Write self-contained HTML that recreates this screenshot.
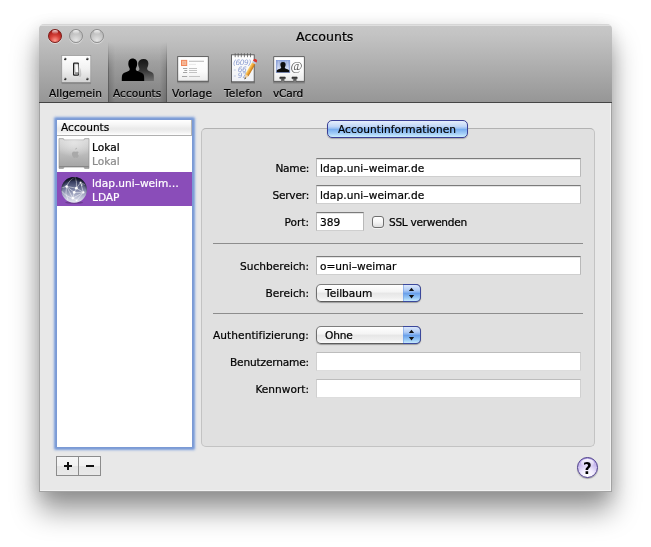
<!DOCTYPE html>
<html lang="de">
<head>
<meta charset="utf-8">
<title>Accounts</title>
<style>
html,body{margin:0;padding:0;background:#fff;}
body{width:651px;height:547px;position:relative;overflow:hidden;
  font-family:"DejaVu Sans","Liberation Sans",sans-serif;font-size:10.6px;color:#000;-webkit-text-stroke:.22px currentColor;}
.abs{position:absolute;will-change:transform;}
.t{position:absolute;white-space:nowrap;line-height:14px;will-change:transform;}
#win{position:absolute;left:39px;top:24px;width:573px;height:468px;
  border-radius:5px 5px 0 0;background:#e8e8e8;
  box-shadow:0 19px 28px rgba(0,0,0,.40),0 3px 16px rgba(0,0,0,.12);}
#bar{position:absolute;left:0;top:0;width:573px;height:78px;border-radius:5px 5px 0 0;
  background:linear-gradient(#d6d6d6 0,#d6d6d6 1px,#dfdfdf 1px,#dfdfdf 2px,#c7c7c7 2px,#c3c3c3 14%,#969696 100%);}
#barline{position:absolute;left:0;top:78px;width:573px;height:1px;background:#454545;}
#cont{position:absolute;left:0;top:79px;width:573px;height:389px;box-sizing:border-box;border:1px solid #a3a3a3;border-top:0;box-shadow:inset -1px -1px 0 #f2f2f2;}
.tl{position:absolute;top:5px;width:14px;height:14px;border-radius:50%;box-sizing:border-box;}
.tl.gray{background:radial-gradient(circle at 50% 85%,#e4e4e4 0,#c9c9c9 45%,#aeaeae 100%);
  border:1px solid #8e8e8e;box-shadow:0 1px 0 rgba(255,255,255,.45);}
.tl.red{background:radial-gradient(circle at 50% 88%,#ff9a8e 0,#d8443c 40%,#b0201c 75%,#8e1613 100%);
  border:1px solid #7c1a17;box-shadow:0 1px 0 rgba(255,255,255,.45);}
.tl.red:after,.tl.gray:after{content:"";position:absolute;left:3px;top:0px;width:6px;height:4px;border-radius:50%;
  background:linear-gradient(rgba(255,255,255,.85),rgba(255,255,255,.05));}
#sel{position:absolute;left:69px;top:18px;width:59px;height:60px;
  background:linear-gradient(rgba(0,0,0,0) 0,rgba(0,0,0,.10) 35%,rgba(0,0,0,.15) 100%);}
#sel:before,#sel:after{content:"";position:absolute;top:0;width:7px;height:60px;}
#sel:before{left:0;background:linear-gradient(90deg,rgba(0,0,0,.32) 0,rgba(0,0,0,.32) 1px,rgba(0,0,0,.14) 1px,rgba(0,0,0,0) 100%);-webkit-mask-image:linear-gradient(rgba(0,0,0,0),#000 45%);mask-image:linear-gradient(rgba(0,0,0,0),#000 45%);}
#sel:after{right:0;background:linear-gradient(270deg,rgba(0,0,0,.32) 0,rgba(0,0,0,.32) 1px,rgba(0,0,0,.14) 1px,rgba(0,0,0,0) 100%);-webkit-mask-image:linear-gradient(rgba(0,0,0,0),#000 45%);mask-image:linear-gradient(rgba(0,0,0,0),#000 45%);}
.tbl{text-shadow:0 1px 0 rgba(255,255,255,.45);}
/* list */
#ring{position:absolute;left:56px;top:119px;width:137px;height:329px;
  background:#7b9ad4;box-shadow:0 0 0 1px #809fd8,0 0 1.5px 2px rgba(134,164,219,.85),0 0 2px 3px rgba(150,176,226,.35);border-radius:1px;}
#list{position:absolute;left:57px;top:120px;width:135px;height:327px;background:#fff;overflow:hidden;}
#lhead{position:absolute;left:0;top:0;width:134px;height:15px;border-right:1px solid #b5b5b5;
  background:linear-gradient(#fff 0,#f6f6f6 30%,#e9e9e9 60%,#f1f1f1 80%,#fff 100%);border-bottom:1px solid #b0b0b0;}
#row2{position:absolute;left:0;top:52px;width:135px;height:34px;background:#8a4db9;}
/* form */
#box{position:absolute;left:201px;top:128px;width:394px;height:319px;box-sizing:border-box;
  border:1px solid #c3c3c3;border-top-color:#b2b2b2;border-radius:5px;background:#e0e0e0;}
.fld{position:absolute;height:19px;box-sizing:border-box;background:#fff;
  border:1px solid #b9b9b9;border-top-color:#7b7b7b;border-bottom-color:#cfcfcf;box-shadow:inset 0 1px 0 #e4e4e4;}
.fld.dis{border-color:#d0d0d0;border-top-color:#bdbdbd;border-bottom-color:#dddddd;box-shadow:none;}
.sep{position:absolute;left:213px;width:370px;height:1px;background:#8d8d8d;}
.lab{will-change:transform;position:absolute;white-space:nowrap;line-height:14px;text-align:right;width:120px;left:189px;}
#tab{position:absolute;left:327px;top:120px;width:141px;height:18px;box-sizing:border-box;border-radius:5px;
  border:1px solid #3a3f96;
  background:linear-gradient(#e6eefc 0,#bfd5f7 35%,#8fbaf2 49%,#78adef 52%,#a2cdf7 78%,#cdeefd 100%);
  box-shadow:0 1px 1px rgba(0,0,0,.25);}
.pop{position:absolute;left:316px;width:105px;height:18px;box-sizing:border-box;border-radius:5px;
  border:1px solid #6e6e6e;border-top-color:#7d7d7d;border-bottom-color:#5c5c5c;
  background:linear-gradient(#ffffff 0,#f4f4f4 45%,#e6e6e6 50%,#efefef 80%,#fbfbfb 100%);
  box-shadow:0 1px 1px rgba(0,0,0,.3);}
.pop .cap{position:absolute;right:-1px;top:-1px;width:18px;height:18px;box-sizing:border-box;border-radius:0 5px 5px 0;
  border:1px solid #3b489c;border-left:0;
  background:linear-gradient(#dbe7fb 0,#b1ccf5 32%,#7aabee 49%,#689fea 52%,#93c5f5 78%,#c6eafc 100%);
  box-shadow:inset 1px 0 0 rgba(120,160,230,.6);}
#cb{position:absolute;left:372px;top:216px;width:12px;height:12px;box-sizing:border-box;border-radius:3px;
  border:1px solid #6f6f6f;background:linear-gradient(#ffffff,#f6f6f6 50%,#dedede);box-shadow:0 1px 0 rgba(255,255,255,.6);}
#pm{position:absolute;left:56px;top:456px;width:45px;height:20px;box-sizing:border-box;border:1px solid #8c8c8c;
  background:linear-gradient(#f6f6f6 0,#f2f2f2 49%,#e5e5e5 50%,#e9e9e9 100%);}
#pm:before{content:"";position:absolute;left:21px;top:-1px;width:1px;height:20px;background:#8c8c8c;}
#help{position:absolute;left:577px;top:457px;width:21px;height:21px;box-sizing:border-box;border-radius:50%;
  border:1px solid #4a3a8a;
  background:radial-gradient(circle at 50% 92%,#ffffff 0,#f1ecfd 32%,#cbbdee 62%,#ab9be0 100%);
  box-shadow:0 1px 1px rgba(0,0,0,.3);}
#help:before{content:"";position:absolute;left:3px;top:1px;width:13px;height:8px;border-radius:50%;
  background:linear-gradient(rgba(255,255,255,.95),rgba(255,255,255,.1));}
</style>
</head>
<body>
<div id="win">
  <div id="bar"></div>
  <div id="barline"></div>
  <div id="cont"></div>
  <div class="tl red" style="left:9px"></div>
  <div class="tl gray" style="left:30px"></div>
  <div class="tl gray" style="left:51px"></div>
  <div id="sel"></div>
</div>

<!-- title -->
<div class="t tbl" id="title" style="left:296px;top:29px;font-size:12.6px;line-height:16px;">Accounts</div>

<!-- toolbar icons -->
<svg class="abs" style="left:60px;top:53px" width="34" height="33" viewBox="0 0 34 33">
  <defs>
    <linearGradient id="pl" x1="0" y1="0" x2="0" y2="1"><stop offset="0" stop-color="#ffffff"/><stop offset=".5" stop-color="#f1f1f1"/><stop offset="1" stop-color="#d2d2d2"/></linearGradient>
    <linearGradient id="sh1" x1="0" y1="0" x2="0" y2="1"><stop offset="0" stop-color="#000" stop-opacity=".35"/><stop offset="1" stop-color="#000" stop-opacity="0"/></linearGradient>
  </defs>
  <rect x="1.6" y="29" width="29.4" height="2.6" fill="url(#sh1)"/>
  <rect x="1.8" y="2.6" width="29" height="26.8" fill="url(#pl)" stroke="#8c8c8c" stroke-width=".6"/>
  <g fill="#2b2b2b"><circle cx="5.2" cy="5.9" r="1.25"/><circle cx="27.3" cy="5.9" r="1.25"/><circle cx="5.2" cy="26" r="1.25"/><circle cx="27.3" cy="26" r="1.25"/></g>
  <g fill="#e9e9e9"><circle cx="4.8" cy="5.5" r=".55"/><circle cx="26.9" cy="5.5" r=".55"/><circle cx="4.8" cy="25.6" r=".55"/><circle cx="26.9" cy="25.6" r=".55"/></g>
  <rect x="13" y="9.6" width="6" height="13.2" rx="1.2" fill="#1f1f1f"/>
  <rect x="14.1" y="10.8" width="3.8" height="10.8" rx=".4" fill="#dcdcdc"/>
  <path d="M14.6 11 h3.6 l.5 8.600000000000001 h-3.6 z" fill="#fbfbfb" stroke="#6d6d6d" stroke-width=".45"/>
  <path d="M15.100000000000001 19.6 h3.6 l-.3 2 h-3.2 z" fill="#8e8e8e"/>
  <path d="M19.6 14 q2.400000000000001 4 1.4 9.4 l-1.8 .6 z" fill="#000" opacity=".14"/>
</svg>

<svg class="abs" style="left:120px;top:56px" width="36" height="27" viewBox="0 0 36 27">
  <defs>
    <linearGradient id="bk" x1="0" y1="0" x2="0" y2="1"><stop offset="0" stop-color="#151515"/><stop offset=".5" stop-color="#333"/><stop offset="1" stop-color="#707070"/></linearGradient>
  </defs>
  <path fill="url(#bk)" d="M23.4 3 C26.4 2.8 28.5 4.8 28.4 7.8 C28.3 9.4 27.9 10.6 27.3 11.8 C27 12.8 27.2 13.8 28.1 14.4 C29.700000000000003 15.4 32.2 16 33.2 17.4 C33.9 18.6 33.9 20.6 33.9 25 L14 25 L14 17 C16 15.6 18.7 15.2 19.3 13.8 C19.6 12.8 19.1 11.8 18.7 10.8 C18.2 9.4 18 8 18.3 6.4 C18.7 4.600000000000001 20.8 3.2 23.4 3 Z"/>
  <path fill="#000" d="M12 2.6 C15.4 2.4 17.3 4.600000000000001 17.2 7.8 C17.1 9.6 16.6 11 15.9 12.2 C15.6 13.2 15.9 14.2 16.7 14.8 C18.5 16 22.2 16.6 23.4 18.2 C24.2 19.4 24.2 21.2 24.2 25 L1.8 25 C1.8 21.2 1.8 19.4 2.6 18.2 C3.8 16.6 7.4 16 9 14.8 C9.8 14.2 9.9 13.2 9.6 12.2 C8.9 11 8.3 9.6 8.3 7.8 C8.3 4.600000000000001 9.8 2.8 12 2.6 Z"/>
</svg>

<svg class="abs" style="left:175px;top:54px" width="37" height="32" viewBox="0 0 37 32">
  <defs><linearGradient id="cd" x1="0" y1="0" x2="0" y2="1"><stop offset="0" stop-color="#ffffff"/><stop offset=".6" stop-color="#fbfbfb"/><stop offset="1" stop-color="#ebebeb"/></linearGradient></defs>
  <rect x="2.2" y="27" width="31.6" height="2.8" fill="url(#sh1)"/>
  <rect x="2.7" y="2.6" width="30.6" height="24.6" fill="url(#cd)" stroke="#555" stroke-width=".9"/>
  <rect x="6.5" y="6.4" width="5.2" height="5.1" fill="#f5b898" stroke="#f0865a" stroke-width="1"/>
  <rect x="8.3" y="8.2" width="1.6" height="1.6" fill="#f3a987"/>
  <rect x="14" y="6.7" width="15" height="1.2" fill="#c2c2c2"/>
  <rect x="14" y="9.9" width="7" height=".7" fill="#dedede"/>
  <g fill="#9b9b9b">
   <rect x="8" y="14.1" width="4.2" height=".9"/><rect x="9.3" y="16.1" width="2.9" height=".9"/><rect x="8" y="18.1" width="4.2" height=".9"/><rect x="7" y="22" width="5.2" height=".9"/>
  </g>
  <g fill="#bdbdbd">
   <rect x="14" y="14.1" width="8" height=".9"/><rect x="14" y="16.1" width="8" height=".9"/><rect x="14" y="18.1" width="8" height=".9"/><rect x="14" y="22" width="11" height=".9"/>
  </g>
</svg>

<svg class="abs" style="left:228px;top:50px" width="34" height="36" viewBox="0 0 34 36">
  <defs><linearGradient id="np" x1="0" y1="0" x2="0" y2="1"><stop offset="0" stop-color="#ffffff"/><stop offset="1" stop-color="#eef0f4"/></linearGradient>
  <linearGradient id="pc" x1="0" y1="0" x2="1" y2="0"><stop offset="0" stop-color="#fbd878"/><stop offset=".45" stop-color="#f2a93a"/><stop offset="1" stop-color="#c07416"/></linearGradient></defs>
  <rect x="3" y="31.6" width="24" height="2.8" fill="url(#sh1)"/>
  <rect x="3.5" y="4.800000000000001" width="22.700000000000003" height="27" fill="url(#np)" stroke="#555" stroke-width=".9"/>
  <g stroke="#5a5a5a" stroke-width=".8" fill="none" stroke-linecap="round">
    <path d="M7.2 3.6v3.2M10.2 3.6v3.2M13.3 3.6v3.2M16.4 3.6v3.2M19.5 3.6v3.2M22.5 3.6v3.2"/>
  </g>
  <g font-family="'DejaVu Sans','Liberation Sans',sans-serif" font-size="7.4" fill="#8fa0d2" font-style="italic" letter-spacing="-.4">
    <text x="5" y="15">(609)</text><text x="5.6" y="21.8">- 66</text><text x="5.6" y="28.4">- 97</text>
  </g>
  <g transform="translate(27.9,9.5) rotate(29.8)">
    <path d="M-1.9 1.2 Q-1.9 -.4 0 -.4 Q1.9 -.4 1.9 1.2 V2.6 H-1.9 Z" fill="#d9342e"/>
    <rect x="-1.9" y="2.6" width="3.8" height="2" fill="#c3c8da"/>
    <rect x="-1.9" y="4.6" width="3.8" height="13.6" fill="url(#pc)"/>
    <path d="M-1.9 18.2 L0 23 L1.9 18.2 Z" fill="#eed0a2"/>
    <path d="M-.8 21 L0 23 L.8 21 Z" fill="#2a2a2a"/>
  </g>
</svg>

<svg class="abs" style="left:271px;top:54px" width="37" height="32" viewBox="0 0 37 32">
  <defs><linearGradient id="vc" x1="0" y1="0" x2="0" y2="1"><stop offset="0" stop-color="#ffffff"/><stop offset=".6" stop-color="#fafafa"/><stop offset="1" stop-color="#e8e8e8"/></linearGradient>
  <linearGradient id="nt" x1="0" y1="0" x2="0" y2="1"><stop offset="0" stop-color="#2e2e2e"/><stop offset="1" stop-color="#7d7d7d"/></linearGradient>
  <linearGradient id="pb" x1="0" y1="0" x2="0" y2="1"><stop offset="0" stop-color="#8ea3d8"/><stop offset=".5" stop-color="#b8c6e8"/><stop offset="1" stop-color="#e6ebf8"/></linearGradient></defs>
  <rect x="2.2" y="27.4" width="31.6" height="2.8" fill="url(#sh1)"/>
  <path d="M2.7 2.6 H33.4 V27.4 H26.2 V25 H25 V27.4 H22.8 V25 H21 V23.2 H26.2 V25 H33.4 V27.4 H14.2 V25 H12.9 V27.4 H10.7 V25 H8.9 V23.2 H14.2 V25 V27.4 H2.7 Z" fill="none"/>
  <path d="M2.7 2.6 H33.4 V27.4 H25 V24.7 H26.1 V23.1 H21 V24.7 H22.8 V27.4 H12.9 V24.7 H14.2 V23.1 H8.9 V24.7 H10.7 V27.4 H2.7 Z" fill="url(#vc)" stroke="#555" stroke-width=".9" stroke-linejoin="round"/>
  <path d="M8.9 23.1 H14.2 V24.7 H12.9 V27.4 H10.7 V24.7 H8.9 Z M21 23.1 H26.1 V24.7 H25 V27.4 H22.8 V24.7 H21 Z" fill="url(#nt)"/>
  <rect x="5.3" y="6.4" width="13.4" height="12.2" fill="url(#pb)" stroke="#8299d6" stroke-width=".8"/>
  <g stroke="#ffffff" stroke-opacity=".35" stroke-width=".7"><path d="M7.4 6.8v11.4M9.2 6.8v11.4M14.8 6.8v11.4M16.6 6.8v11.4"/></g>
  <path d="M12 7.9 c1.9 0 2.8 1.3 2.6 3 c-.1 1.1-.5 1.7-.8 2.4 c-.1.6.2 1 .7 1.2 c1.2.6 2.900000000000001.9 3.8 1.9 v1.8 h-12.6 v-1.8 c.9-1 2.6-1.3 3.8-1.9 c.5-.2.8-.6.7-1.2 c-.3-.7-.7-1.3-.8-2.4 c-.2-1.7.7-3 2.6-3z" fill="#0c0c0c"/>
  <text x="19.6" y="15.6" font-family="'Liberation Serif',serif" font-size="13" fill="#5e5e5e">@</text>
</svg>

<!-- toolbar labels -->
<div class="t tbl" id="l1" style="left:49px;top:86px;">Allgemein</div>
<div class="t tbl" id="l2" style="left:113px;top:86px;">Accounts</div>
<div class="t tbl" id="l3" style="left:172px;top:86px;">Vorlage</div>
<div class="t tbl" id="l4" style="letter-spacing:.12px;left:224px;top:86px;">Telefon</div>
<div class="t tbl" id="l5" style="letter-spacing:-.2px;left:273px;top:86px;">vCard</div>

<!-- account list -->
<div id="ring"></div>
<div id="list">
  <div id="lhead"></div>
  <div id="row2"></div>
</div>
<div class="t" id="lh" style="left:61px;top:120px;">Accounts</div>
<div class="t" id="r1a" style="left:92px;top:140px;">Lokal</div>
<div class="t" id="r1b" style="left:92px;top:154px;color:#8a8a8a;">Lokal</div>
<div class="t" id="r2a" style="left:92px;top:176px;color:#fff;">ldap.uni&#8211;weim&#8230;</div>
<div class="t" id="r2b" style="left:92px;top:190px;color:#fff;">LDAP</div>

<!-- Mac Pro icon -->
<svg class="abs" style="left:58px;top:137px" width="32" height="33" viewBox="0 0 32 33">
  <defs><linearGradient id="mp" x1="0" y1="0" x2="0" y2="1"><stop offset="0" stop-color="#d9d9d9"/><stop offset=".5" stop-color="#bcbcbc"/><stop offset="1" stop-color="#a2a2a2"/></linearGradient>
  <radialGradient id="mpg" cx=".5" cy=".15" r=".7"><stop offset="0" stop-color="#e6e6e6" stop-opacity=".9"/><stop offset="1" stop-color="#e6e6e6" stop-opacity="0"/></radialGradient></defs>
  <path d="M1 1.600000000000001 H5.4 L6 3 H26 L26.6 1.6 H31 V31.4 H26.6 L26 30 H6 L5.4 31.4 H1 Z" fill="url(#mp)" stroke="#8b8b8b" stroke-width=".6"/>
  <rect x="1.4" y="3" width="29.2" height="20" fill="url(#mpg)"/>
  <path d="M1.2 29.6 H30.8" stroke="#7c7c7c" stroke-width=".8"/>
  <path d="M17.2 12.6 c.1-1 .9-1.800000000000001 1.700000000000001-1.9 c.1 1-.8 1.900000000000001-1.7 1.900000000000001z M19.900000000000002 16.9 c-.1-1.1.8-1.7.9-1.7 c-.5-.7-1.300000000000001-.8-1.600000000000001-.8 c-.7-.1-1.300000000000001.4-1.700000000000001.4 c-.3 0-.9-.4-1.400000000000001-.4 c-.8 0-1.400000000000001.4-1.800000000000001 1.100000000000001 c-.8 1.300000000000001-.2 3.2.5 4.3 c.4.5.8 1.100000000000001 1.400000000000001 1.100000000000001 c.5 0 .7-.3 1.400000000000001-.3 c.6 0 .8.3 1.400000000000001.3 c.6 0 1-.5 1.300000000000001-1.100000000000001 c.4-.6.6-1.200000000000001.6-1.200000000000001 c0 0-1.100000000000001-.4-1.100000000000001-1.700000000000001z" fill="#a9a9a9"/>
</svg>

<!-- Globe icon -->
<svg class="abs" style="left:60px;top:175px" width="29" height="30" viewBox="0 0 29 30">
  <defs><linearGradient id="gl" x1="0" y1="0" x2="0" y2="1"><stop offset="0" stop-color="#0e1024"/><stop offset=".22" stop-color="#3d4366"/><stop offset=".5" stop-color="#7c83a4"/><stop offset=".8" stop-color="#c0c4d8"/><stop offset="1" stop-color="#e6e8f2"/></linearGradient>
  <radialGradient id="glr" cx=".5" cy=".62" r=".62"><stop offset=".74" stop-color="#000" stop-opacity="0"/><stop offset="1" stop-color="#0b0c1c" stop-opacity=".8"/></radialGradient>
  <clipPath id="glc"><circle cx="14.1" cy="14.8" r="12.7"/></clipPath></defs>
  <ellipse cx="14.1" cy="27.6" rx="9" ry="1.4" fill="rgba(0,0,0,.22)"/>
  <circle cx="14.1" cy="14.8" r="12.85" fill="url(#gl)"/>
  <g clip-path="url(#glc)">
  <g stroke="#ffffff" stroke-width=".7" fill="none" opacity=".7">
    <path d="M1 13 L6.6 11.4 L16.4 13.2 L20.6 7.6 L25 9.6"/>
    <path d="M6.6 11.4 L14.2 17.4 L16.4 13.2 L23.4 17.4 L14.2 17.4 L12.8 23.2 L6.6 11.4"/>
    <path d="M12.8 23.2 L23.4 17.4 L20.6 7.6"/><path d="M12.8 23.2 L16.6 25.4 L23.4 17.4"/>
    <path d="M6.6 11.4 Q10 3.5 16 2"/><path d="M16.4 13.2 Q17 7 15.4 2"/><path d="M1.6 16 Q5 21 12.8 23.2"/>
    <path d="M6.6 11.4 Q4.6 19 8 25"/>
  </g>
  <g fill="#fff"><circle cx="6.6" cy="11.4" r="1.25"/><circle cx="16.4" cy="13.2" r="1.35"/><circle cx="14.2" cy="17.4" r="1.35"/><circle cx="23.4" cy="17.4" r="1.1"/><circle cx="12.8" cy="23.2" r="1.2"/><circle cx="20.6" cy="7.6" r="1"/><circle cx="16.6" cy="25.4" r=".9"/><circle cx="21.8" cy="10" r=".8"/></g>
  </g>
  <circle cx="14.1" cy="14.8" r="12.85" fill="url(#glr)"/>
</svg>

<!-- group box -->
<div id="box"></div>
<div id="tab"></div>
<div class="t" id="tabt" style="letter-spacing:.04px;left:338px;top:122px;">Accountinformationen</div>

<div class="lab" id="la1" style="letter-spacing:-.25px;top:161px;">Name:</div>
<div class="fld" style="left:316px;top:158px;width:265px;"></div>
<div class="t" id="f1" style="letter-spacing:.08px;left:320px;top:161px;">ldap.uni&#8211;weimar.de</div>

<div class="lab" id="la2" style="letter-spacing:-.22px;top:188px;">Server:</div>
<div class="fld" style="left:316px;top:185px;width:265px;"></div>
<div class="t" id="f2" style="letter-spacing:.08px;left:320px;top:188px;">ldap.uni&#8211;weimar.de</div>

<div class="lab" id="la3" style="top:215px;">Port:</div>
<div class="fld" style="left:316px;top:212px;width:48px;"></div>
<div class="t" id="f3" style="left:320px;top:215px;">389</div>
<div id="cb"></div>
<div class="t" id="ssl" style="letter-spacing:-.3px;left:389px;top:215px;">SSL verwenden</div>

<div class="sep" style="top:243px;"></div>

<div class="lab" id="la4" style="top:259px;">Suchbereich:</div>
<div class="fld" style="left:316px;top:256px;width:265px;"></div>
<div class="t" id="f4" style="left:320px;top:259px;">o=uni&#8211;weimar</div>

<div class="lab" id="la5" style="top:286px;">Bereich:</div>
<div class="pop" style="top:284px;"><div class="cap"></div></div>
<svg class="abs" style="left:407px;top:287px" width="9" height="12" viewBox="0 0 9 12"><path d="M4.5 0.7 L7.1 4.1 H1.9 Z M4.5 11.5 L7.1 8.1 H1.9 Z" fill="#111"/></svg>
<div class="t" id="p1" style="left:325px;top:286px;">Teilbaum</div>

<div class="sep" style="top:313px;"></div>

<div class="lab" id="la6" style="letter-spacing:.06px;top:328px;">Authentifizierung:</div>
<div class="pop" style="top:326px;"><div class="cap"></div></div>
<svg class="abs" style="left:407px;top:329px" width="9" height="12" viewBox="0 0 9 12"><path d="M4.5 0.7 L7.1 4.1 H1.9 Z M4.5 11.5 L7.1 8.1 H1.9 Z" fill="#111"/></svg>
<div class="t" id="p2" style="letter-spacing:-.2px;left:324.5px;top:328px;">Ohne</div>

<div class="lab" id="la7" style="letter-spacing:-.17px;top:355px;">Benutzername:</div>
<div class="fld dis" style="left:316px;top:352px;width:265px;"></div>
<div class="lab" id="la8" style="top:382px;">Kennwort:</div>
<div class="fld dis" style="left:316px;top:379px;width:265px;"></div>

<!-- plus / minus -->
<div id="pm"></div>
<div class="abs" style="left:64px;top:465px;width:8px;height:2px;background:#111;"></div>
<div class="abs" style="left:67px;top:462px;width:2px;height:8px;background:#111;"></div>
<div class="abs" style="left:86px;top:465px;width:8px;height:2px;background:#111;"></div>

<!-- help -->
<div id="help"></div>
<div class="t" id="q" style="left:583px;top:460px;font-weight:bold;font-size:15px;line-height:19px;-webkit-text-stroke:0;">?</div>
</body>
</html>
